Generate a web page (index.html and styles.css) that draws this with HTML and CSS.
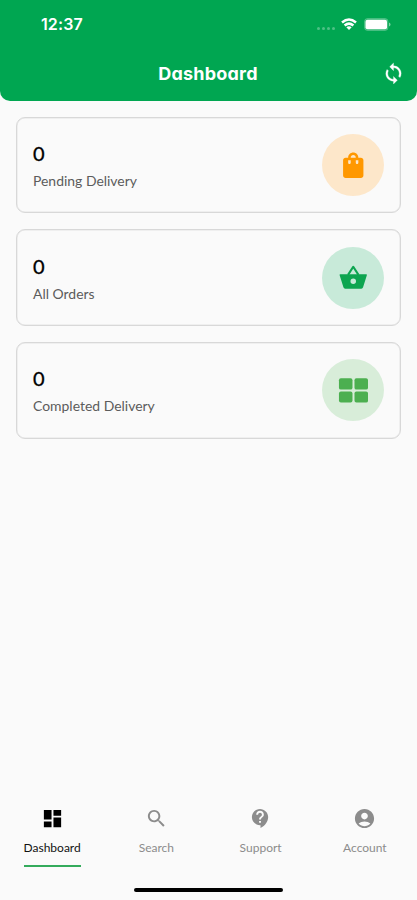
FILE: index.html
```html
<!DOCTYPE html>
<html lang="en">
<head>
<meta charset="utf-8">
<title>Dashboard</title>
<link rel="stylesheet" href="styles.css">
</head>
<body>
<header class="header">
  <div class="status">
    <span class="time">12:37</span>
    <div class="signals">
      <span class="dots"><i></i><i></i><i></i><i></i></span>
      <svg class="wifi" viewBox="0 0 16 12" fill="none" stroke="#fff" stroke-width="2.5"><path d="M1 4.500Q8-1.500 15 4.500M3.600 7.500Q8 3.800 12.400 7.500"/><path d="M5.300 9.300Q8 7.200 10.700 9.300L8 12Z" fill="#fff" stroke="none"/></svg>
      <svg class="battery" viewBox="0 0 27 13"><rect x=".5" y=".5" width="23.500" height="12" rx="3" fill="#fff" fill-opacity=".2" stroke="#fff" stroke-opacity=".2"/><rect x="1.500" y="1.800" width="21.500" height="9.400" rx="2" fill="#fff"/><path d="M25 4.500q1.500.6 1.500 2t-1.500 2z" fill="#fff" fill-opacity=".5"/></svg>
    </div>
  </div>
  <div class="bar">
    <h1 class="title">Dashboard</h1>
    <svg class="sync" viewBox="0 0 24 24" fill="#fff" stroke="#fff" stroke-width=".3"><path d="M12 4V1L8 5l4 4V6c3.310 0 6 2.690 6 6 0 1.010-.25 1.970-.7 2.800l1.460 1.460C19.540 15.030 20 13.570 20 12c0-4.420-3.580-8-8-8zm0 14c-3.310 0-6-2.690-6-6 0-1.010.25-1.970.7-2.800L5.240 7.740C4.460 8.970 4 10.430 4 12c0 4.420 3.580 8 8 8v3l4-4-4-4v3z"/></svg>
  </div>
</header>
<main class="cards">
  <section class="card">
    <div class="info"><span class="count">0</span><span class="name">Pending Delivery</span></div>
    <div class="badge orange"><svg viewBox="0 0 24 24" fill="#ff9800"><path d="M18 6h-2c0-2.210-1.790-4-4-4S8 3.790 8 6H6c-1.100 0-2 .9-2 2v12c0 1.100.9 2 2 2h12c1.100 0 2-.9 2-2V8c0-1.100-.9-2-2-2zm-8 4c0 .55-.45 1-1 1s-1-.45-1-1V8h2v2zm2-6c1.100 0 2 .9 2 2h-4c0-1.100.9-2 2-2zm4 6c0 .55-.45 1-1 1s-1-.45-1-1V8h2v2z"/></svg></div>
  </section>
  <section class="card">
    <div class="info"><span class="count">0</span><span class="name">All Orders</span></div>
    <div class="badge mint"><svg viewBox="0 0 32 32"><path d="M10.500 13.500 16 5l5.500 8.500" fill="none" stroke="#0da550" stroke-width="2.200" stroke-linejoin="round"/><path fill="#0da550" fill-rule="evenodd" d="M2.800 12.800H29.200a1 1 0 0 1 1 1.400L26.300 26.500a2 2 0 0 1-2 1.500H7.700a2 2 0 0 1-2-1.500L1.800 14.200a1 1 0 0 1 1-1.400ZM16 17.400a2.900 2.900 0 1 0 0 5.800 2.900 2.900 0 0 0 0-5.800Z"/></svg></div>
  </section>
  <section class="card">
    <div class="info"><span class="count">0</span><span class="name">Completed Delivery</span></div>
    <div class="badge lime"><svg viewBox="0 0 32 32" fill="#4caf50"><rect x="1" y="3.500" width="14.200" height="11.800" rx="2"/><rect x="17.300" y="3.500" width="14.200" height="11.800" rx="2"/><rect x="1" y="17.300" width="14.200" height="11.500" rx="2"/><rect x="17.300" y="17.300" width="14.200" height="11.500" rx="2"/></svg></div>
  </section>
</main>
<nav class="nav">
  <a class="tab active"><svg viewBox="0 0 24 24"><path d="M3 13h8V3H3v10zm0 8h8v-6H3v6zm10 0h8V11h-8v10zm0-18v6h8V3h-8z"/></svg><span>Dashboard</span></a>
  <a class="tab"><svg viewBox="0 0 24 24"><path d="M15.500 14h-.79l-.28-.27C15.410 12.590 16 11.110 16 9.500 16 5.910 13.090 3 9.500 3S3 5.910 3 9.500 5.910 16 9.500 16c1.610 0 3.090-.59 4.230-1.570l.27.28v.79l5 4.990L20.490 19l-4.990-5zm-6 0C7.010 14 5 11.990 5 9.500S7.010 5 9.500 5 14 7.010 14 9.500 11.990 14 9.500 14z"/></svg><span>Search</span></a>
  <a class="tab"><svg viewBox="0 0 24 24"><path d="M11.500 2C6.810 2 3 5.810 3 10.500S6.810 19 11.500 19h.5v3c4.860-2.340 8-7 8-11.500C20 5.810 16.190 2 11.500 2zm1 14.500h-2v-2h2v2zm0-3.500h-2c0-3.250 3-3 3-5 0-1.100-.9-2-2-2s-2 .9-2 2h-2c0-2.210 1.790-4 4-4s4 1.790 4 4c0 2.500-3 2.750-3 5z"/></svg><span>Support</span></a>
  <a class="tab"><svg viewBox="0 0 24 24"><path d="M12 2C6.480 2 2 6.480 2 12s4.480 10 10 10 10-4.480 10-10S17.520 2 12 2zm0 4c1.930 0 3.500 1.570 3.500 3.500S13.930 13 12 13s-3.500-1.570-3.500-3.500S10.070 6 12 6zm0 14c-2.030 0-4.430-.82-6.140-2.880C7.550 15.800 9.680 15 12 15s4.450.8 6.140 2.120C16.430 19.180 14.030 20 12 20z"/></svg><span>Account</span></a>
</nav>
<div class="home"></div>
</body>
</html>
```
FILE: styles.css
```css
* { box-sizing: border-box; }
body {
  margin: 0;
  height: 900px;
  display: flex;
  flex-direction: column;
  background: #fafafa;
  font-family: Lato, sans-serif;
  overflow: hidden;
}
svg { display: block; flex: none; }
.header {
  height: 100.500px;
  background: #00a651;
  border-radius: 0 0 10px 10px;
  color: #fff;
}
.status {
  height: 48px;
  padding: 0 26px 0 41px;
  display: flex;
  align-items: center;
  justify-content: space-between;
}
.time { font: 600 16px/20px Inter, sans-serif; letter-spacing: .1px; }
.signals { display: flex; align-items: center; }
.dots { display: flex; gap: 2px; margin: 8px 6px 0 0; }
.dots i { width: 3px; height: 3px; border-radius: 50%; background: #fff; opacity: .3; }
.wifi { width: 16px; height: 12px; margin-right: 7px; }
.battery { width: 27px; height: 13px; }
.bar {
  height: 51px;
  display: grid;
  grid-template-columns: 1fr auto 1fr;
  align-items: center;
  padding: 0 12px 0 11px;
}
.title {
  grid-column: 2;
  margin: 0;
  font: 700 18px/24px Inter, sans-serif;
  font-feature-settings: "cv11";
  letter-spacing: .2px;
}
.sync { width: 23px; height: 23px; justify-self: end; }
.cards { padding: 16px 16px 0; display: flex; flex-direction: column; gap: 16px; }
.card {
  height: 96.700px;
  border: 1px solid #d8d8d8;
  box-shadow: inset 0 0 0 .5px #e4e4e4;
  border-radius: 9px;
  display: flex;
  align-items: center;
  justify-content: space-between;
  padding: 0 16px;
}
.info { display: flex; flex-direction: column; align-items: flex-start; padding-top: 3px; }
.count { font-size: 20px; line-height: 28px; color: #000; -webkit-text-stroke: .3px #000; }
.name { font-size: 13.950px; line-height: 27px; color: #5c5c5c; white-space: nowrap; }
.badge {
  width: 62px;
  height: 62px;
  border-radius: 50%;
  display: flex;
  align-items: center;
  justify-content: center;
}
.badge svg { width: 30.500px; height: 30.500px; margin-right: .5px; }
.orange { background: #fde7ca; }
.mint { background: #c8ead9; }
.lime { background: #d8edd9; }
.nav { margin-top: auto; height: 61px; display: flex; }
.tab {
  flex: 1;
  display: flex;
  flex-direction: column;
  align-items: center;
  color: #8c8c8c;
  font-size: 12px;
  line-height: 18px;
}
.tab svg { width: 23px; height: 23px; fill: currentColor; }
.tab span { margin-top: 9px; height: 28px; }
.active { color: #111; }
.active svg { fill: #000; }
.active span { border-bottom: 2px solid #34ab5c; }
.home { width: 149px; height: 4px; margin: 20px auto 8px; border-radius: 2px; background: #000; flex: none; }
```
